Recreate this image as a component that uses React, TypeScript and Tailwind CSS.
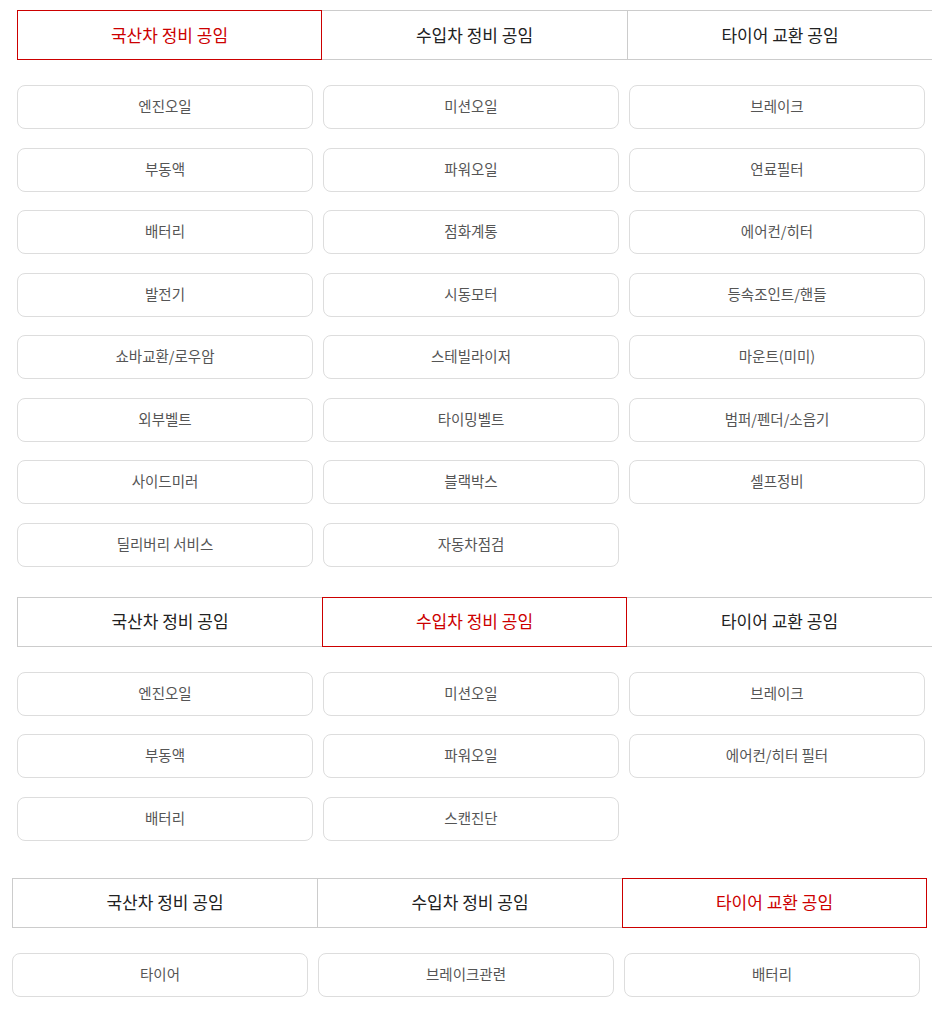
import React from 'react';

type Section = {
  active: number;
  items: string[];
  offset: 'ml-[17px]' | 'ml-[12px]';
  top: string;
};

const tabs = ['국산차 정비 공임', '수입차 정비 공임', '타이어 교환 공임'];

const sections: Section[] = [
  {
    active: 0,
    offset: 'ml-[17px]',
    top: 'pt-[10px]',
    items: [
      '엔진오일', '미션오일', '브레이크',
      '부동액', '파워오일', '연료필터',
      '배터리', '점화계통', '에어컨/히터',
      '발전기', '시동모터', '등속조인트/핸들',
      '쇼바교환/로우암', '스테빌라이저', '마운트(미미)',
      '외부벨트', '타이밍벨트', '범퍼/펜더/소음기',
      '사이드미러', '블랙박스', '셀프정비',
      '딜리버리 서비스', '자동차점검',
    ],
  },
  {
    active: 1,
    offset: 'ml-[17px]',
    top: 'pt-[30px]',
    items: ['엔진오일', '미션오일', '브레이크', '부동액', '파워오일', '에어컨/히터 필터', '배터리', '스캔진단'],
  },
  {
    active: 2,
    offset: 'ml-[12px]',
    top: 'pt-[37px]',
    items: ['타이어', '브레이크관련', '배터리'],
  },
];

function TabBar({ active }: { active: number }) {
  return (
    <div className="grid grid-cols-3 w-[915px]">
      {tabs.map((t, i) => {
        const isActive = i === active;
        // inactive tabs draw a left divider unless the active tab sits right before them
        const leftLine = !isActive && (i === 0 || i - 1 !== active);
        return (
          <div
            key={t}
            className={`h-[50px] flex items-center justify-center text-[17px] ${
              isActive
                ? 'relative z-10 border border-[#cc0000] text-[#cc0000]'
                : 'border-t border-b border-[#cccccc] text-[#222222]'
            } ${leftLine ? 'border-l' : ''}`}
          >
            <span className="pb-px">{t}</span>
          </div>
        );
      })}
    </div>
  );
}

export default function App() {
  return (
    <div
      className="w-[945px] min-h-[1010px] bg-white pb-[14px]"
      style={{ fontFamily: '"Noto Sans CJK KR", "Noto Sans", sans-serif' }}
    >
      {sections.map((s, idx) => (
        <div key={idx} className={`${s.offset} ${s.top}`}>
          <TabBar active={s.active} />
          <div className="grid grid-cols-3 w-[908px] gap-x-[10px] gap-y-[18.5px] mt-[25px]">
            {s.items.map((it, j) => (
              <div
                key={j}
                className="h-[44px] flex items-center justify-center rounded-[8px] border border-[#dddddd] text-[14.5px] text-[#555555]"
              >
                <span className="pb-[2px]">{it}</span>
              </div>
            ))}
          </div>
        </div>
      ))}
    </div>
  );
}
